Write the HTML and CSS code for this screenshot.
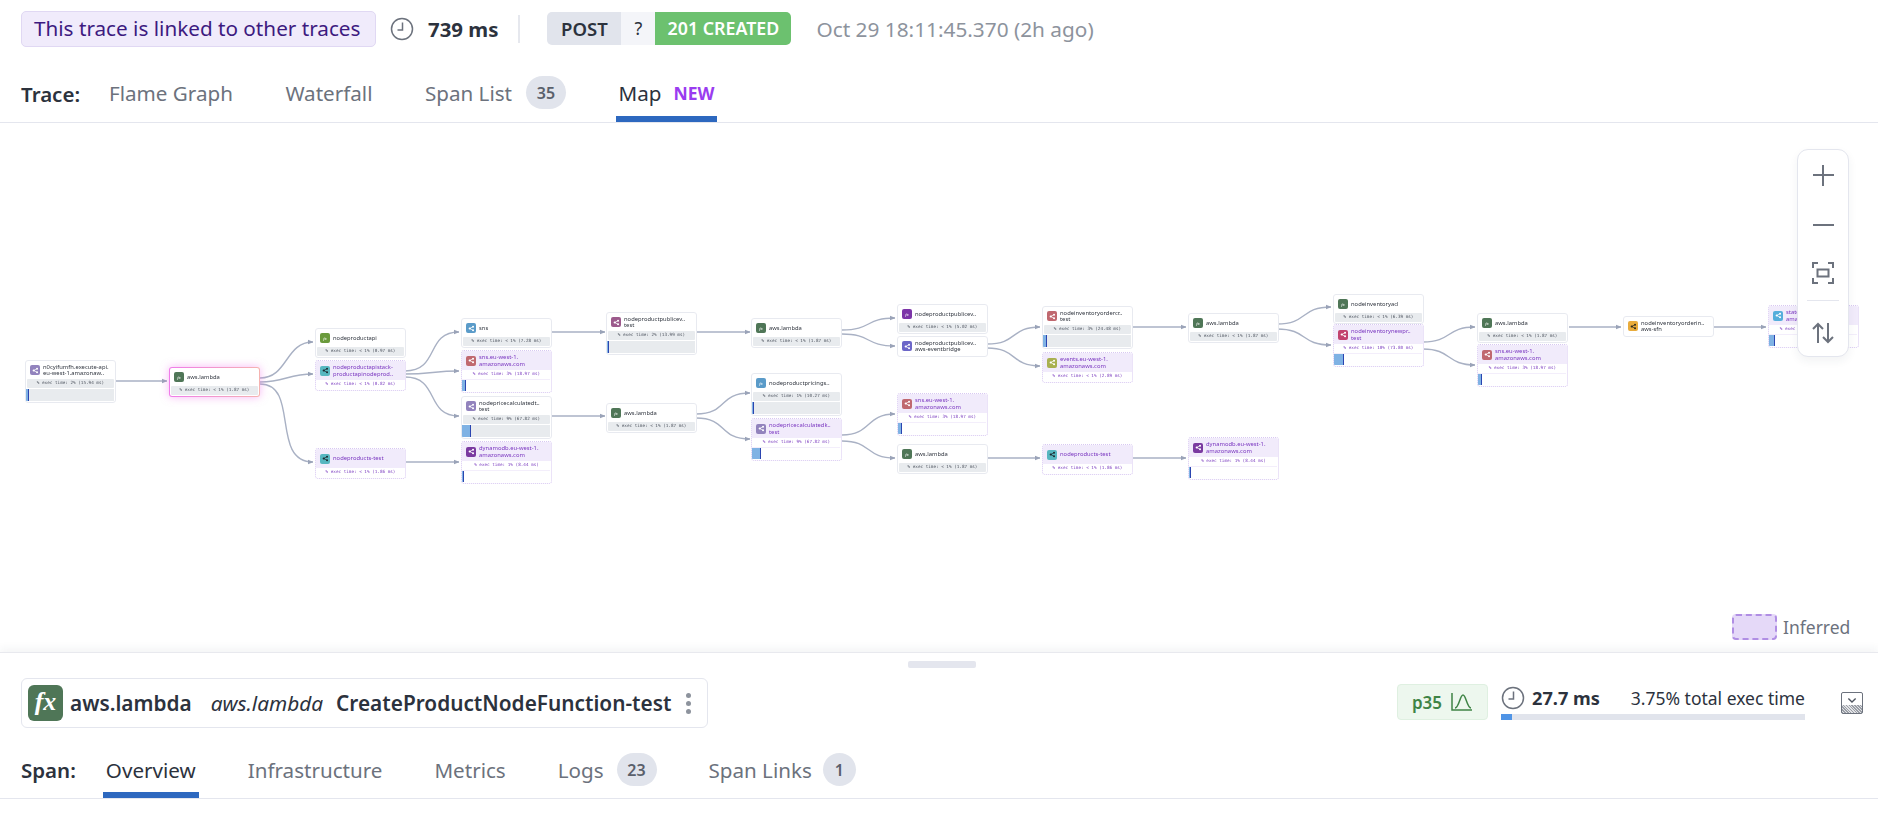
FILE: index.html
```html
<!DOCTYPE html>
<html lang="en">
<head>
<meta charset="utf-8">
<title>Trace map</title>
<link rel="stylesheet" href="styles.css">
</head>
<body>
<svg class="defs" width="0" height="0" aria-hidden="true">
  <symbol id="share" viewBox="0 0 12 12"><path d="M3 6 8.5 3M3 6l5.500 3" fill="none" stroke="currentColor" stroke-width="1.200"/><circle cx="3" cy="6" r="1.900" fill="currentColor"/><circle cx="8.700" cy="3" r="1.700" fill="currentColor"/><circle cx="8.700" cy="9" r="1.700" fill="currentColor"/></symbol>
  <symbol id="clock" viewBox="0 0 24 24"><circle cx="12" cy="12" r="10.500" fill="none" stroke="currentColor" stroke-width="1.500"/><path d="M12.500 5.500v7.500H7.500" fill="none" stroke="currentColor" stroke-width="1.500"/></symbol>
  <marker id="arrow" viewBox="0 0 6 6" refX="5.500" refY="3" markerWidth="5.500" markerHeight="5.500" markerUnits="userSpaceOnUse" orient="auto"><path d="M0 .4 6 3 0 5.600z" fill="#9aa3b8"/></marker>
</svg>

<header class="summary">
  <div class="linked">This trace is linked to other traces</div>
  <svg class="clock"><use href="#clock"/></svg>
  <strong class="duration">739 ms</strong>
  <span class="vsep"></span>
  <div class="status">
    <span class="method">POST</span><span class="route">?</span><span class="code">201 CREATED</span>
  </div>
  <span class="date">Oct 29 18:11:45.370 (2h ago)</span>
</header>

<nav class="tabs trace-tabs">
  <span class="tabs-label">Trace:</span>
  <a class="tab">Flame Graph</a>
  <a class="tab">Waterfall</a>
  <a class="tab">Span List<span class="badge">35</span></a>
  <a class="tab active">Map<span class="new">NEW</span></a>
</nav>

<main class="map">
  <div class="diagram">
    <svg class="edges" viewBox="0 123 1878 529">
      <path d="M115 381H167"/>
      <path d="M260 378C288 378 285 342 313 342"/>
      <path d="M260 382C285 382 288 374 313 374"/>
      <path d="M260 384C300 384 270 462 313 462"/>
      <path d="M405 371C440 371 425 332 459 332"/>
      <path d="M405 374C430 374 435 371 459 371"/>
      <path d="M405 377C440 377 425 416 459 416"/>
      <path d="M405 462H459"/>
      <path d="M550 332H605"/>
      <path d="M550 416H605"/>
      <path d="M696 332H750"/>
      <path d="M696 414C728 414 718 393 750 393"/>
      <path d="M696 418C728 418 718 439 750 439"/>
      <path d="M842 330C872 330 865 318 895 318"/>
      <path d="M842 334C872 334 865 346 895 346"/>
      <path d="M842 435C872 435 865 414 895 414"/>
      <path d="M842 441C872 441 865 458 895 458"/>
      <path d="M987 344C1018 344 1010 327 1040 327"/>
      <path d="M987 348C1018 348 1010 366 1040 366"/>
      <path d="M987 458H1040"/>
      <path d="M1132 458H1186"/>
      <path d="M1132 327H1186"/>
      <path d="M1277 324C1308 324 1300 307 1331 307"/>
      <path d="M1277 329C1308 329 1300 345 1331 345"/>
      <path d="M1423 342C1452 342 1446 327 1475 327"/>
      <path d="M1423 349C1452 349 1446 365 1475 365"/>
      <path d="M1569 327H1621"/>
      <path d="M1714 327H1766"/>
    </svg>

    <div class="node" style="left:25px;top:237px"><div class="head"><span class="ic c-lav"><svg><use href="#share"/></svg></span><span class="name">n0cyifumfh.execute-api.<br>eu-west-1.amazonaw..</span></div><div class="stat">% exec time: 2% (15.94 ms)</div><div class="track"><i class="b2"></i></div></div>
    <div class="node selected" style="left:169px;top:244px"><div class="head"><span class="ic c-green">fx</span><span class="name">aws.lambda</span></div><div class="stat">% exec time: &lt; 1% (1.87 ms)</div></div>
    <div class="node" style="left:315px;top:205px"><div class="head"><span class="ic c-apple">fx</span><span class="name">nodeproductapi</span></div><div class="stat">% exec time: &lt; 1% (0.97 ms)</div></div>
    <div class="node infer" style="left:315px;top:237px"><div class="head"><span class="ic c-teal"><svg><use href="#share"/></svg></span><span class="name">nodeproductapistack-<br>productapinodeprod..</span></div><div class="stat">% exec time: &lt; 1% (0.82 ms)</div></div>
    <div class="node infer" style="left:315px;top:325px"><div class="head"><span class="ic c-teal"><svg><use href="#share"/></svg></span><span class="name">nodeproducts-test</span></div><div class="stat">% exec time: &lt; 1% (1.86 ms)</div></div>

    <div class="node" style="left:461px;top:195px"><div class="head"><span class="ic c-blue"><svg><use href="#share"/></svg></span><span class="name">sns</span></div><div class="stat">% exec time: &lt; 1% (7.28 ms)</div></div>
    <div class="node infer" style="left:461px;top:227px"><div class="head"><span class="ic c-rose"><svg><use href="#share"/></svg></span><span class="name">sns.eu-west-1.<br>amazonaws.com</span></div><div class="stat">% exec time: 3% (18.97 ms)</div><div class="track"><i class="b3"></i></div></div>
    <div class="node" style="left:461px;top:273px"><div class="head"><span class="ic c-lav"><svg><use href="#share"/></svg></span><span class="name">nodepricecalculatedt..<br>test</span></div><div class="stat">% exec time: 9% (67.82 ms)</div><div class="track"><i class="b9"></i></div></div>
    <div class="node infer" style="left:461px;top:318px"><div class="head"><span class="ic c-plum"><svg><use href="#share"/></svg></span><span class="name">dynamodb.eu-west-1.<br>amazonaws.com</span></div><div class="stat">% exec time: 1% (8.44 ms)</div><div class="track"><i class="b1"></i></div></div>

    <div class="node" style="left:606px;top:189px"><div class="head"><span class="ic c-mauve"><svg><use href="#share"/></svg></span><span class="name">nodeproductpublicev..<br>test</span></div><div class="stat">% exec time: 2% (13.99 ms)</div><div class="track"><i class="b1"></i></div></div>
    <div class="node" style="left:606px;top:280px"><div class="head"><span class="ic c-green">fx</span><span class="name">aws.lambda</span></div><div class="stat">% exec time: &lt; 1% (1.87 ms)</div></div>

    <div class="node" style="left:751px;top:195px"><div class="head"><span class="ic c-green">fx</span><span class="name">aws.lambda</span></div><div class="stat">% exec time: &lt; 1% (1.87 ms)</div></div>
    <div class="node" style="left:751px;top:250px"><div class="head"><span class="ic c-blue">fx</span><span class="name">nodeproductpricings..</span></div><div class="stat">% exec time: 1% (10.27 ms)</div><div class="track"><i class="b1"></i></div></div>
    <div class="node infer" style="left:751px;top:295px"><div class="head"><span class="ic c-lav"><svg><use href="#share"/></svg></span><span class="name">nodepricecalculatedk..<br>test</span></div><div class="stat">% exec time: 9% (67.82 ms)</div><div class="track"><i class="b9"></i></div></div>

    <div class="node" style="left:897px;top:181px"><div class="head"><span class="ic c-violet">fx</span><span class="name">nodeproductpublicev..</span></div><div class="stat">% exec time: &lt; 1% (5.02 ms)</div></div>
    <div class="node" style="left:897px;top:213px"><div class="head"><span class="ic c-indigo"><svg><use href="#share"/></svg></span><span class="name">nodeproductpublicev..<br>aws-eventbridge</span></div></div>
    <div class="node infer" style="left:897px;top:270px"><div class="head"><span class="ic c-rose"><svg><use href="#share"/></svg></span><span class="name">sns.eu-west-1.<br>amazonaws.com</span></div><div class="stat">% exec time: 3% (18.97 ms)</div><div class="track"><i class="b3"></i></div></div>
    <div class="node" style="left:897px;top:321px"><div class="head"><span class="ic c-green">fx</span><span class="name">aws.lambda</span></div><div class="stat">% exec time: &lt; 1% (1.87 ms)</div></div>

    <div class="node" style="left:1042px;top:183px"><div class="head"><span class="ic c-rose"><svg><use href="#share"/></svg></span><span class="name">nodeinventoryordercr..<br>test</span></div><div class="stat">% exec time: 3% (24.48 ms)</div><div class="track"><i class="b3"></i></div></div>
    <div class="node infer" style="left:1042px;top:229px"><div class="head"><span class="ic c-olive"><svg><use href="#share"/></svg></span><span class="name">events.eu-west-1.<br>amazonaws.com</span></div><div class="stat">% exec time: &lt; 1% (2.89 ms)</div></div>
    <div class="node infer" style="left:1042px;top:321px"><div class="head"><span class="ic c-teal"><svg><use href="#share"/></svg></span><span class="name">nodeproducts-test</span></div><div class="stat">% exec time: &lt; 1% (1.86 ms)</div></div>

    <div class="node" style="left:1188px;top:190px"><div class="head"><span class="ic c-green">fx</span><span class="name">aws.lambda</span></div><div class="stat">% exec time: &lt; 1% (1.87 ms)</div></div>
    <div class="node infer" style="left:1188px;top:314px"><div class="head"><span class="ic c-plum"><svg><use href="#share"/></svg></span><span class="name">dynamodb.eu-west-1.<br>amazonaws.com</span></div><div class="stat">% exec time: 1% (8.44 ms)</div><div class="track"><i class="b1"></i></div></div>

    <div class="node" style="left:1333px;top:171px"><div class="head"><span class="ic c-green">fx</span><span class="name">nodeinventoryacl</span></div><div class="stat">% exec time: &lt; 1% (6.39 ms)</div></div>
    <div class="node infer" style="left:1333px;top:201px"><div class="head"><span class="ic c-crimson"><svg><use href="#share"/></svg></span><span class="name">nodeinventorynewpr..<br>test</span></div><div class="stat">% exec time: 10% (73.80 ms)</div><div class="track"><i class="b10"></i></div></div>

    <div class="node" style="left:1477px;top:190px"><div class="head"><span class="ic c-green">fx</span><span class="name">aws.lambda</span></div><div class="stat">% exec time: &lt; 1% (1.87 ms)</div></div>
    <div class="node infer" style="left:1477px;top:221px"><div class="head"><span class="ic c-rose"><svg><use href="#share"/></svg></span><span class="name">sns.eu-west-1.<br>amazonaws.com</span></div><div class="stat">% exec time: 3% (18.97 ms)</div><div class="track"><i class="b3"></i></div></div>

    <div class="node" style="left:1623px;top:193px"><div class="head"><span class="ic c-orange"><svg><use href="#share"/></svg></span><span class="name">nodeinventoryorderin..<br>aws-sfn</span></div></div>
    <div class="node infer" style="left:1768px;top:182px"><div class="head"><span class="ic c-sky"><svg><use href="#share"/></svg></span><span class="name">states.eu-west-1.<br>amazonaws.com</span></div><div class="stat">% exec time: 5% (38.12 ms)</div><div class="track"><i class="b5"></i></div></div>
  </div>

  <div class="controls">
    <button class="ctl"><svg viewBox="0 0 22 22"><path d="M11 1v21M1 11h21"/></svg></button>
    <button class="ctl"><svg viewBox="0 0 22 22"><path d="M1 11h21"/></svg></button>
    <button class="ctl"><svg viewBox="0 0 22 22"><path d="M1 6V1h5M16 1h5v5M21 16v5h-5M6 21H1v-5M5.500 7.500h11v7h-11z"/></svg></button>
    <span class="ctl-sep"></span>
    <button class="ctl"><svg viewBox="0 0 22 22"><path d="M6 21V2M1 7l5-5 5 5M16 1v19M11 15l5 5 5-5"/></svg></button>
  </div>

  <div class="legend"><span class="legend-box"></span>Inferred</div>
</main>

<section class="panel">
  <div class="handle"></div>
  <div class="panel-row">
    <div class="span-card">
      <span class="fx">fx</span>
      <strong class="svc">aws.lambda</strong>
      <em class="op">aws.lambda</em>
      <strong class="res">CreateProductNodeFunction-test</strong>
      <span class="kebab"><i></i><i></i><i></i></span>
    </div>
    <div class="metrics">
      <div class="p35">p35
        <svg viewBox="0 0 22 18"><path d="M1 0v17h20M4 15C8 15 9 2 12 2s4 13 8 13"/></svg>
      </div>
      <div class="timing">
        <div class="timing-text">
          <svg class="clock"><use href="#clock"/></svg>
          <strong>27.7 ms</strong>
          <span class="pct">3.75% total exec time</span>
        </div>
        <div class="bar"><i></i></div>
      </div>
      <span class="collapse"><svg viewBox="0 0 22 22"><path d="M7 6l4 4 4-4"/></svg></span>
    </div>
  </div>
  <nav class="tabs span-tabs">
    <span class="tabs-label">Span:</span>
    <a class="tab active">Overview</a>
    <a class="tab">Infrastructure</a>
    <a class="tab">Metrics</a>
    <a class="tab">Logs<span class="badge">23</span></a>
    <a class="tab">Span Links<span class="badge small">1</span></a>
  </nav>
</section>
</body>
</html>
```
FILE: styles.css
```css
* { box-sizing: border-box; }
html, body { margin: 0; height: 100%; }
body {
  width: 1878px;
  height: 820px;
  overflow: hidden;
  display: flex;
  flex-direction: column;
  background: #fff;
  color: #2c323d;
  font-family: "Noto Sans", sans-serif;
}
.defs { position: absolute; }

/* Summary row */
.summary {
  height: 62px;
  padding: 0 0 5px 21px;
  display: flex;
  align-items: center;
  flex: none;
}
.linked {
  width: 355px;
  height: 36px;
  line-height: 33px;
  padding-left: 12px;
  font-size: 20.700px;
  color: #3d1a80;
  background: #f0ebfb;
  border: 1px solid #e0d8f3;
  border-radius: 5px;
  white-space: nowrap;
}
.clock { width: 24px; height: 24px; color: #6c727d; flex: none; }
.summary .clock { margin-left: 14px; }
.duration { margin-left: 14px; font-size: 20.400px; font-weight: 700; white-space: nowrap; }
.vsep { width: 2px; height: 28px; margin: 0 27px 0 20px; background: #e6e8ee; }
.status {
  display: flex;
  height: 33px;
  line-height: 33px;
  border-radius: 5px;
  overflow: hidden;
  font-size: 17.800px;
  font-weight: 600;
  white-space: nowrap;
}
.method { width: 74px; text-align: center; background: #e1e4ec; font-size: 18.500px; }
.route { width: 34px; text-align: center; background: #f4f5f9; font-weight: 400; font-size: 18px; }
.code { width: 136px; text-align: center; background: #6cc16f; color: #fff; }
.date { margin-left: 25px; font-size: 20.800px; color: #8d939d; white-space: nowrap; }

/* Tabs */
.tabs {
  display: flex;
  align-items: stretch;
  flex: none;
  padding-left: 21px;
  border-bottom: 1px solid #e4e6ee;
  font-size: 20.600px;
}
.trace-tabs { height: 61px; padding-top: 1px; }
.span-tabs { height: 47px; }
.tabs-label { font-weight: 600; color: #2c323d; line-height: 50px; font-size: 20.500px; }
.trace-tabs .tabs-label { padding-top: 6px; }
.tab {
  display: flex;
  align-items: center;
  height: 100%;
  padding: 14px 3px 8px;
  color: #6c727d;
  border-bottom: 6px solid transparent;
  margin-left: 46.500px;
  white-space: nowrap;
}
.tabs-label + .tab { margin-left: 26px; }
.span-tabs .tabs-label { line-height: 36px; }
.span-tabs .tab { margin-left: 46px; padding: 0 3px 5px; }
.span-tabs .tabs-label + .tab { margin-left: 27px; }
.tab.active { color: #2c323d; border-bottom-color: #2d68bf; }
.badge {
  display: inline-flex;
  align-items: center;
  justify-content: center;
  width: 40px;
  height: 33px;
  margin-left: 14px;
  border-radius: 17px;
  background: #e1e4ec;
  font-size: 16px;
  font-weight: 600;
  color: #5a606b;
}
.span-tabs .badge { margin-left: 13px; }
.span-tabs .badge.small { width: 33px; margin-left: 11px; }
.new { margin-left: 12px; font-size: 17.500px; font-weight: 700; color: #9a3cf0; }

/* Map canvas */
.map { position: relative; flex: none; height: 529px; }
.diagram { position: absolute; inset: 0; filter: blur(.6px); }
.edges { position: absolute; inset: 0; width: 100%; height: 100%; }
.edges path {
  fill: none;
  stroke: #a9b1c4;
  stroke-width: 1.400;
  marker-end: url(#arrow);
}
.node {
  position: absolute;
  width: 91px;
  background: #fff;
  border: 1px solid #e8eaf0;
  border-radius: 3px;
  overflow: hidden;
  padding-bottom: 1px;
}
.head {
  display: flex;
  align-items: center;
  gap: 3px;
  height: 18px;
  padding-left: 4px;
}
.ic {
  flex: none;
  width: 10px;
  height: 10px;
  border-radius: 2px;
  display: flex;
  align-items: center;
  justify-content: center;
  color: #fff;
  font: italic 5px "Liberation Serif", serif;
}
.ic svg { width: 7px; height: 7px; }
.name {
  font-size: 5.800px;
  line-height: 6.300px;
  letter-spacing: .02px;
  color: #2f343e;
  white-space: nowrap;
}
.stat {
  height: 8.500px;
  margin: 0 1px;
  background: #e8ebee;
  border-radius: 1px;
  text-align: center;
  font: 4.300px/8.500px "DejaVu Sans Mono", monospace;
  color: #4e545f;
  white-space: nowrap;
}
.track {
  display: flex;
  height: 12px;
  margin: 1px 1px 0 0;
  background: #e8ebee;
}
.track i {
  display: block;
  background: #7fb2e4;
  border-right: 1px solid #2b45b0;
}
.b1 { width: 2px; }
.b2 { width: 3px; }
.b3 { width: 4px; }
.b5 { width: 6px; }
.b9 { width: 9px; }
.b10 { width: 10px; }
.selected {
  border: 1px solid transparent;
  background: linear-gradient(#fff, #fff) padding-box, linear-gradient(90deg, #f07bea, #f5b3b0) border-box;
  overflow: visible;
  box-shadow: 0 0 8px rgba(240, 110, 235, .5);
}
.infer {
  border: 1px dotted #d8c8f2;
}
.infer .head { height: 19px; background: #f1ebfb; }
.infer .name { color: #7a36c0; }
.infer .stat { background: #fff; color: #7d3fc0; margin-top: 0; }
.infer .track { background: #fff; border-top: 1px solid #f3eefb; margin-top: 0; }

.c-lav { background: #9283bd; }
.c-green { background: #4f7657; }
.c-apple { background: #6a9a3c; }
.c-teal { background: #57b7c0; color: #1d2b30; }
.c-blue { background: #5a9bc9; }
.c-rose { background: #c0686f; }
.c-plum { background: #7a3aa0; }
.c-mauve { background: #9c5a8c; }
.c-violet { background: #7c35a8; }
.c-indigo { background: #6c66c8; }
.c-olive { background: #a9b050; }
.c-crimson { background: #c2426e; }
.c-orange { background: #e9ac3c; color: #2c2a20; }
.c-sky { background: #55aedb; }

.controls {
  position: absolute;
  left: 1797px;
  top: 26px;
  width: 52px;
  height: 208px;
  padding: 1px 8px 0;
  display: flex;
  flex-direction: column;
  align-items: center;
  background: #fff;
  border: 1px solid #e4e6ee;
  border-radius: 11px;
  box-shadow: 0 4px 10px rgba(40, 50, 70, .06);
}
.ctl {
  flex: none;
  width: 32px;
  height: 48px;
  padding: 0;
  border: 0;
  background: none;
  display: flex;
  align-items: center;
  justify-content: center;
}
.ctl:first-child { margin-bottom: 2px; }
.ctl svg { width: 22px; height: 22px; }
.ctl path { fill: none; stroke: #6c727d; stroke-width: 2; }
.ctl-sep { flex: none; width: 32px; height: 1px; margin: 3px 0 8px; background: #e4e6ee; }

.legend {
  position: absolute;
  left: 1732px;
  top: 491px;
  display: flex;
  align-items: center;
  gap: 6px;
  font-size: 17.500px;
  color: #6c727d;
}
.legend-box {
  width: 45px;
  height: 26px;
  border: 2px dashed #b08ee4;
  border-radius: 4px;
  background: #e5d9f8;
}

/* Bottom panel */
.panel {
  position: relative;
  flex: 1;
  border-top: 1px solid #e8e9ee;
  box-shadow: 0 -4px 8px rgba(40, 50, 70, .05);
  background: #fff;
}
.handle {
  position: absolute;
  left: 908px;
  top: 8px;
  width: 68px;
  height: 7px;
  border-radius: 2px;
  background: #e4e6ee;
}
.panel-row {
  height: 99px;
  padding: 25px 15px 0 21px;
  display: flex;
  justify-content: space-between;
  align-items: flex-start;
}
.span-card {
  width: 687px;
  height: 50px;
  padding-left: 6px;
  display: flex;
  align-items: center;
  border: 1px solid #e4e6ee;
  border-radius: 6px;
  white-space: nowrap;
  font-size: 20.800px;
}
.fx {
  width: 35px;
  height: 36px;
  margin-right: 7px;
  border-radius: 6px;
  background: #4f7657;
  color: #fff;
  text-align: center;
  font: italic 700 26px/34px "Liberation Serif", serif;
}
.svc { font-weight: 600; }
.op { margin-left: 19px; }
.res { margin-left: 13px; font-weight: 600; }
.kebab {
  margin-left: 15px;
  display: flex;
  flex-direction: column;
  gap: 3px;
}
.kebab i { width: 5px; height: 5px; border-radius: 50%; background: #8d939d; }
.metrics { display: flex; align-items: flex-start; margin-top: 6px; }
.p35 {
  width: 91px;
  height: 36px;
  display: flex;
  align-items: center;
  justify-content: center;
  gap: 9px;
  background: #edf7ee;
  border: 1px solid #dff0e1;
  border-radius: 4px;
  color: #3f8446;
  font-size: 17px;
  font-weight: 600;
}
.p35 svg { width: 22px; height: 18px; fill: none; stroke: #3f8446; stroke-width: 1.500; }
.timing { width: 304px; margin-left: 13px; margin-top: 2px; }
.timing-text { display: flex; align-items: center; height: 24px; font-size: 17.500px; white-space: nowrap; }
.timing-text .clock { margin-right: 7px; }
.timing-text strong { font-weight: 700; font-size: 18.200px; }
.pct { margin-left: auto; }
.bar { height: 6px; margin-top: 4px; background: #e1e4ec; }
.bar i { display: block; width: 11px; height: 100%; background: #4f94e6; }
.collapse {
  width: 22px;
  height: 22px;
  margin: 8px 0 0 36px;
  border: 1px solid #6c727d;
  border-radius: 2px;
  background:
    linear-gradient(#fff 62%, transparent 62%),
    repeating-linear-gradient(45deg, #9a9ea6 0 1px, #e2e3e6 1px 2px);
}
.collapse svg { display: block; width: 20px; height: 20px; fill: none; stroke: #4e545f; stroke-width: 1.500; }
```
